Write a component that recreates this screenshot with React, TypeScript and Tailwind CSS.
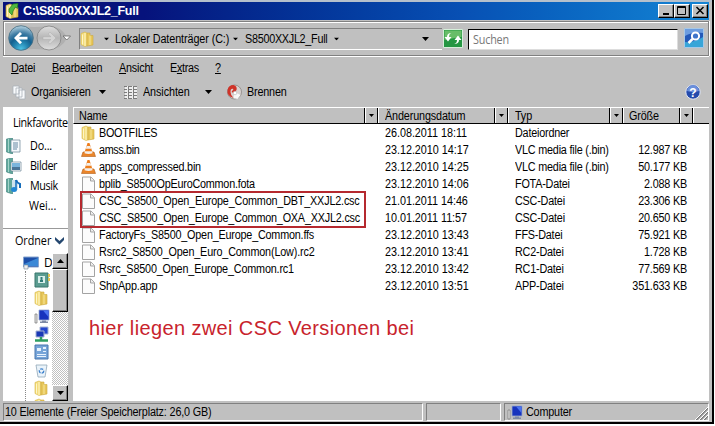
import type { ReactNode } from "react";

type Kind = "folder" | "vlc" | "file";

interface Entry {
  name: string;
  kind: Kind;
  date: string;
  type: string;
  size: string;
  spacing: string;
}

const entries: Entry[] = [
  { name: "BOOTFILES", kind: "folder", date: "26.08.2011 18:11", type: "Dateiordner", size: "", spacing: "tracking-[-0.29px]" },
  { name: "amss.bin", kind: "vlc", date: "23.12.2010 14:17", type: "VLC media file (.bin)", size: "12.987 KB", spacing: "tracking-[-0.4px]" },
  { name: "apps_compressed.bin", kind: "vlc", date: "23.12.2010 14:25", type: "VLC media file (.bin)", size: "50.177 KB", spacing: "tracking-[-0.22px]" },
  { name: "bplib_S8500OpEuroCommon.fota", kind: "file", date: "23.12.2010 14:06", type: "FOTA-Datei", size: "2.088 KB", spacing: "tracking-[-0.25px]" },
  { name: "CSC_S8500_Open_Europe_Common_DBT_XXJL2.csc", kind: "file", date: "21.01.2011 14:46", type: "CSC-Datei", size: "23.306 KB", spacing: "tracking-[-0.19px]" },
  { name: "CSC_S8500_Open_Europe_Common_OXA_XXJL2.csc", kind: "file", date: "10.01.2011 11:57", type: "CSC-Datei", size: "20.650 KB", spacing: "tracking-[-0.21px]" },
  { name: "FactoryFs_S8500_Open_Europe_Common.ffs", kind: "file", date: "23.12.2010 13:43", type: "FFS-Datei", size: "75.921 KB", spacing: "tracking-[-0.22px]" },
  { name: "Rsrc2_S8500_Open_Euro_Common(Low).rc2", kind: "file", date: "23.12.2010 13:41", type: "RC2-Datei", size: "1.728 KB", spacing: "tracking-[-0.18px]" },
  { name: "Rsrc_S8500_Open_Europe_Common.rc1", kind: "file", date: "23.12.2010 13:42", type: "RC1-Datei", size: "77.569 KB", spacing: "tracking-[-0.19px]" },
  { name: "ShpApp.app", kind: "file", date: "23.12.2010 13:51", type: "APP-Datei", size: "351.633 KB", spacing: "tracking-[-0.12px]" },
];

// Narrow UI lettering used for nearly every label
function Label({ children, className = "tracking-[-0.2px]" }: { children: ReactNode; className?: string }) {
  return <span className={`inline-block origin-left scale-x-90 whitespace-nowrap ${className}`}>{children}</span>;
}

function Caret({ className = "" }: { className?: string }) {
  return (
    <svg className={`shrink-0 ${className}`} width="7" height="4" viewBox="0 0 7 4">
      <path d="M0 0h7L3.5 4z" fill="#000" />
    </svg>
  );
}

function FolderIcon({ open = false }: { open?: boolean }) {
  return (
    <svg className="shrink-0" width="15" height="16" viewBox="0 0 15 16">
      <path d="M1 2.500L5 1l2 1v13l-2 .5-4-2z" fill="#f3dc7c" stroke="#d6b545" strokeWidth=".6" />
      <path d="M7 2h3v2.500h3V14l-6 1z" fill="#e7c75a" stroke="#cda93c" strokeWidth=".6" />
      <path d="M5 2v13M2.500 3.500v10" stroke="#fff6c6" />
      <path d="M10 4.500V14" stroke="#f8e69a" />
      {open && <path d="M4 9V6l4-5 5-.5-.5 5-2-1.500L8 8l-1 4z" fill="#4fb93f" stroke="#176f1b" strokeWidth=".6" />}
    </svg>
  );
}

function ConeIcon() {
  return (
    <svg className="shrink-0" width="15" height="16" viewBox="0 0 15 16">
      <path d="M2 10h11l1.500 4.500h-14z" fill="#e8862d" stroke="#b65e15" strokeWidth=".6" />
      <path d="M6.500 1h2l3.500 11q-4.500 2-9 0z" fill="#ee7e1d" />
      <path d="M5.700 4h3.700l.9 2.700H4.800zM4 9.300h7l.6 2q-4 1.500-8.200 0z" fill="#f3efe9" />
    </svg>
  );
}

function PageIcon() {
  return (
    <svg className="shrink-0" width="15" height="16" viewBox="0 0 15 16">
      <path d="M1.500 1h8.500l3.500 3.500V15.500h-12z" fill="#fcfcfc" stroke="#a3a3a3" />
      <path d="M9.500 1v4h4" fill="#eee" stroke="#a3a3a3" />
    </svg>
  );
}

function EntryIcon({ kind }: { kind: Kind }) {
  if (kind === "folder") return <FolderIcon />;
  if (kind === "vlc") return <ConeIcon />;
  return <PageIcon />;
}

function LibraryIcon({ children }: { children: ReactNode }) {
  return (
    <svg className="shrink-0" width="16" height="16" viewBox="0 0 16 16">
      <path d="M.5 1l6-1v16l-6-2z" fill="#5fa79b" stroke="#397e78" strokeWidth=".6" />
      <path d="M2.500 1v13" stroke="#a3d3c9" />
      {children}
    </svg>
  );
}

function ComputerIcon() {
  return (
    <svg className="shrink-0" width="16" height="15" viewBox="0 0 16 15">
      <path d="M1 5h2v9H1z" fill="#e5e5e5" stroke="#777" strokeWidth=".7" />
      <path d="M5 1h10v10H5z" fill="#1733bd" stroke="#9ba9cc" strokeWidth=".8" />
      <path d="M9 1.500h5.500V8z" fill="#4a73f0" />
      <path d="M8 11.500h4v1h2V14H6v-1.500h2z" fill="#7e8aa5" />
    </svg>
  );
}

function WindowButton({ children }: { children: ReactNode }) {
  return (
    <button className="flex h-[14px] w-4 items-center justify-center border border-t-white border-r-black border-b-black border-l-white bg-[#c0c0c0] shadow-[inset_-1px_-1px_0_#808080]">
      <svg className="shrink-0" width="12" height="12" viewBox="0 0 12 12">{children}</svg>
    </button>
  );
}

function TitleBar() {
  return (
    <div className="flex h-[18px] items-center bg-linear-to-r from-[#06127c] from-20% via-[#0850b4] via-65% to-[#1584d4] pl-[2px] pr-px">
      <FolderIcon open />
      <span className="ml-[3px] text-[12.500px] font-bold leading-[18px] tracking-[-0.25px] text-white">C:\S8500XXJL2_Full</span>
      <div className="ml-auto flex">
        <WindowButton><path d="M3 8h6v2H3z" /></WindowButton>
        <WindowButton><path d="M1.500 1.500h8v8h-8zM1.500 2.500h8" fill="none" stroke="#000" /></WindowButton>
        <div className="w-[2px]" />
        <WindowButton><path d="M2.500 2l7 7M9.500 2l-7 7" stroke="#000" strokeWidth="1.500" /></WindowButton>
      </div>
    </div>
  );
}

function NavButtons() {
  return (
    <svg className="shrink-0" width="66" height="30" viewBox="0 0 66 30">
      <defs>
        <radialGradient id="back" cx=".5" cy=".95" r=".95">
          <stop offset="0" stopColor="#4cc3e6" />
          <stop offset=".3" stopColor="#2384b0" />
          <stop offset=".5" stopColor="#13608f" />
          <stop offset=".7" stopColor="#4480a6" />
          <stop offset="1" stopColor="#b9d5e2" />
        </radialGradient>
        <linearGradient id="fwd" x1="0" y1="0" x2="0" y2="1">
          <stop offset="0" stopColor="#dedede" />
          <stop offset=".5" stopColor="#b6b6b6" />
          <stop offset="1" stopColor="#dedede" />
        </linearGradient>
      </defs>
      <path d="M15 3Q29 5 43 3q14 0 19 12-5 11-19 12-14-2-28 0z" fill="#b0b0b0" />
      <circle cx="16" cy="15" r="12.300" fill="url(#back)" stroke="#426b80" strokeWidth=".8" />
      <path d="M9 15l6-6 2 2-3 2.700h8.500v2.800H14l3 2.700-2 2z" fill="#fff" />
      <circle cx="44" cy="15" r="12" fill="url(#fwd)" stroke="#818181" strokeWidth=".8" />
      <path d="M51 15l-6-6-2 2 3 2.700h-8v2.800h8l-3 2.700 2 2z" fill="#d4d4d4" stroke="#aaa" strokeWidth=".4" />
      <path d="M58 13h7.500l-3.700 4z" fill="#fff" stroke="#666" strokeWidth=".8" />
    </svg>
  );
}

function AddressRow() {
  return (
    <div className="mt-px flex h-[35px] border border-[#808080] shadow-[inset_1px_1px_0_#fff,0_1px_0_#fff,1px_0_0_#fff]">
      <div className="mt-px ml-px w-[74px] shrink-0"><NavButtons /></div>
      <div className="mt-[6px] flex h-[22px] w-[363px] shrink-0 items-center border-t border-l border-b border-t-[#808080] border-b-white border-l-[#808080] bg-[#c0c0c0]">
        <FolderIcon />
        <Caret className="ml-[8px] scale-75" />
        <span className="ml-[5px] w-[113px]"><Label className="tracking-[-0.1px]">Lokaler Datenträger (C:)</Label></span>
        <Caret className="ml-[4px] scale-75" />
        <span className="ml-[6px] w-[83px]"><Label className="tracking-[-0.3px]">S8500XXJL2_Full</Label></span>
        <Caret className="ml-[5px] scale-75" />
        <Caret className="mr-[13px] ml-auto" />
      </div>
      <svg className="mt-[7px] ml-px shrink-0" width="20" height="19" viewBox="0 0 20 19">
        <path d="M.5.500h19v18H.5z" fill="#249642" stroke="#d6eeda" />
        <path d="M1.500 1.500h17V8q-8 1-17 3z" fill="#68bd68" />
        <path d="M8.500 4Q6 4.500 6 8h2.500L5 12.500 1.500 8H4q0-4 4.500-4zM11 15q3-.5 3-4h-2.500L15 6.500l3.500 4.500H16q0 4-5 4z" fill="#fff" />
      </svg>
      <div className="mt-[7px] ml-[5px] flex h-[21px] w-[210px] shrink-0 items-center border border-t-black border-r-[#ddd] border-b-[#ddd] border-l-black bg-white pl-[4px] font-['Open_Sans',sans-serif] text-[#777]">
        <Label className="tracking-[-0.2px]">Suchen</Label>
      </div>
      <svg className="mt-[6px] ml-[6px] shrink-0" width="20" height="20" viewBox="0 0 20 20">
        <path d="M.5.500h19v19H.5z" fill="#2459b8" stroke="#a7c8e6" />
        <path d="M1 14q9 1 18-5v10H1z" fill="#38a5d8" />
        <path d="M1 1h18v4Q9 3 1 8z" fill="#6c9de0" />
        <circle cx="11.500" cy="8" r="3.600" fill="#3f75ca" stroke="#fff" strokeWidth="2" />
        <path d="M8.500 11L4.500 15" stroke="#fff" strokeWidth="2.500" />
      </svg>
    </div>
  );
}

function MenuBar() {
  return (
    <div className="mt-px flex h-[21px] items-center">
      <span className="ml-[8px] w-[41px]"><Label><u>D</u>atei</Label></span>
      <span className="w-[67px]"><Label><u>B</u>earbeiten</Label></span>
      <span className="w-[51px]"><Label><u>A</u>nsicht</Label></span>
      <span className="w-[45px]"><Label className="tracking-[-0.35px]">E<u>x</u>tras</Label></span>
      <Label><u>?</u></Label>
    </div>
  );
}

function CommandBar() {
  return (
    <div className="flex h-[30px] items-center pb-[2px]">
      <svg className="ml-[9px]" width="14" height="15" viewBox="0 0 14 15">
        <path d="M1 1h6v8H1zM4 3h6v9H4zM7 5h6v9H7z" fill="#f8fafc" stroke="#a9b1b9" strokeWidth=".8" />
      </svg>
      <span className="ml-[5px] w-[60px]"><Label>Organisieren</Label></span>
      <Caret className="ml-[8px]" />
      <svg className="ml-[18px]" width="14" height="15" viewBox="0 0 14 15">
        <path d="M1 1h12v13H1z" fill="#eee" />
        <path d="M0 1.500h3m2 0h3m2 0h3M0 4.500h3m2 0h3m2 0h3M0 7.500h3m2 0h3m2 0h3M0 10.500h3m2 0h3m2 0h3M0 13.500h3m2 0h3m2 0h3M4.500 1v13M9.500 1v13" stroke="#6f6f6f" strokeWidth=".9" />
      </svg>
      <span className="ml-[5px] w-[48px]"><Label className="tracking-[-0.1px]">Ansichten</Label></span>
      <Caret className="ml-[14px]" />
      <svg className="ml-[14px]" width="17" height="16" viewBox="0 0 16 16">
        <circle cx="8" cy="8" r="7" fill="#d9d3d1" stroke="#827b78" strokeWidth=".7" />
        <path d="M8 8l6 3-3 4-4-1z" fill="#f8f8f8" />
        <path d="M7 14Q0 12 1 6q1-5 6-5 4 1 3 5-2 4-5 2l2-3q-3-1-3 3 0 3 3 6z" fill="#cf3328" />
        <circle cx="8.500" cy="9" r="1.800" fill="#fff" stroke="#aaa" strokeWidth=".5" />
      </svg>
      <span className="ml-[4px]"><Label>Brennen</Label></span>
      <svg className="mr-[8px] ml-auto" width="16" height="16" viewBox="0 0 16 16">
        <circle cx="8" cy="8" r="7.200" fill="#244aac" stroke="#e0e6f3" />
        <path d="M2 7a6 6 0 0 1 12 0q-6 2-12 0z" fill="#6b8fdb" />
        <text x="8" y="12.500" textAnchor="middle" fontSize="12" fontWeight="bold" fill="#fff">?</text>
      </svg>
    </div>
  );
}

function ScrollButton({ up = false }: { up?: boolean }) {
  return (
    <div className="flex h-4 w-4 items-center justify-center border border-t-white border-r-black border-b-black border-l-white bg-[#c0c0c0] shadow-[inset_-1px_-1px_0_#808080]">
      <Caret className={up ? "rotate-180" : ""} />
    </div>
  );
}

function TreeItem({ children }: { children: ReactNode }) {
  return <div className="flex h-[18px] shrink-0 items-center">{children}</div>;
}

function Tree() {
  return (
    <div className="flex h-[148px] overflow-hidden">
      <div className="w-[49px] overflow-hidden">
        <div className="mt-px flex h-[17px] items-center pl-[20px]">
          <svg className="shrink-0" width="17" height="14" viewBox="0 0 17 14">
            <path d="M.5 1h15v10H.5z" fill="#1d4fa8" stroke="#87a5cf" />
            <path d="M1 8L15 2v8H1z" fill="#3b88d6" />
            <path d="M1 9h4v4H1z" fill="#eee" stroke="#789" strokeWidth=".6" />
          </svg>
          <span className="ml-[4px]">D</span>
        </div>
        <div className="ml-[22px] flex h-[130px] flex-col items-start border-l border-dotted border-[#888] pl-[8px]">
          <TreeItem>
            <svg width="16" height="16" viewBox="0 0 16 16">
              <path d="M1 1h13v14H1z" fill="#5b9c91" stroke="#39766d" />
              <path d="M14 2h2v3h-2zm0 4h2v3h-2z" fill="#e3c352" />
              <path d="M4 4h7v7H4z" fill="#d9efeb" />
              <path d="M6 10V8q1.500-2 3 0v2zM6.500 5h2v2h-2z" fill="#327b78" />
            </svg>
          </TreeItem>
          <TreeItem><FolderIcon /></TreeItem>
          <TreeItem><ComputerIcon /></TreeItem>
          <TreeItem>
            <svg width="16" height="17" viewBox="0 0 16 17">
              <path d="M6 1h8v7H6z" fill="#2547ce" stroke="#a5b2d2" />
              <path d="M2 5h8v6H2z" fill="#1a39b6" stroke="#a5b2d2" />
              <path d="M7 11v3M1 14.500h13" stroke="#2f9e62" strokeWidth="2.500" />
            </svg>
          </TreeItem>
          <TreeItem>
            <svg width="15" height="16" viewBox="0 0 15 16">
              <path d="M1 1h13v14H1z" fill="#76a4d8" stroke="#4877ae" />
              <path d="M3 4h4v3H3zM9 3h3v2H9zM9 7h3v1H9zM3 10h9v1H3zM3 12h9v1H3z" fill="#e8f2fd" />
            </svg>
          </TreeItem>
          <TreeItem>
            <svg width="15" height="15" viewBox="0 0 15 15">
              <path d="M2 2h11l-2 12H4z" fill="#eaf3fa" stroke="#91a7b8" strokeWidth=".8" />
              <circle cx="7.500" cy="8" r="2.200" fill="none" stroke="#3d82ce" strokeDasharray="3 1" strokeWidth="1.300" />
            </svg>
          </TreeItem>
          <TreeItem><FolderIcon /></TreeItem>
          <TreeItem><FolderIcon /></TreeItem>
        </div>
      </div>
      <div className="flex w-4 flex-col bg-[repeating-conic-gradient(#c0c0c0_0_25%,#fff_0_50%)] bg-[length:2px_2px]">
        <ScrollButton up />
        <div className="h-[43px] border border-t-white border-r-black border-b-black border-l-white bg-[#c0c0c0] shadow-[inset_-1px_-1px_0_#808080]" />
        <div className="mt-auto"><ScrollButton /></div>
      </div>
    </div>
  );
}

function Sidebar() {
  return (
    <aside className="flex w-[65px] flex-col bg-white font-['Open_Sans',sans-serif] text-[12px]">
      <div className="mt-[7px] h-[22px] w-[55px] pl-[10px] leading-[18px]"><Label className="tracking-[-0.42px]">Linkfavorite</Label></div>
      <div className="flex h-5 items-center gap-[8px] pl-[3px]">
        <LibraryIcon><path d="M5 2h9v12H5z" fill="#f6f9fc" stroke="#6c8497" strokeWidth=".7" /><path d="M7 5h5M7 7h5M7 9h5M7 11h4" stroke="#6587a3" /></LibraryIcon>
        <Label>Do...</Label>
      </div>
      <div className="flex h-5 items-center gap-[8px] pl-[3px]">
        <LibraryIcon><path d="M5 4h10v9H5z" fill="#fff" stroke="#6c8497" strokeWidth=".7" /><path d="M6 5h8v4H6z" fill="#7bb5dd" /><path d="M6 9h8v3H6z" fill="#4b7598" /></LibraryIcon>
        <Label className="tracking-[-0.45px]">Bilder</Label>
      </div>
      <div className="flex h-5 items-center gap-[8px] pl-[3px]">
        <LibraryIcon><path d="M6 2h6v10H6z" fill="#cde3ee" /><path d="M10 2q1 3 4 4v4" fill="none" stroke="#156dbb" strokeWidth="2" /><path d="M10 2v9" stroke="#156dbb" strokeWidth="1.500" /><ellipse cx="8" cy="11.500" rx="3" ry="2.500" fill="#2187d4" /></LibraryIcon>
        <Label className="tracking-[-0.5px]">Musik</Label>
      </div>
      <div className="h-[32px] pl-[26px] leading-5"><Label className="tracking-normal">Wei...</Label></div>
      <div className="flex h-[25px] shrink-0 items-center border-t border-[#999] bg-white pl-[12px]">
        <span className="w-[39px]"><Label className="tracking-[-0.05px]">Ordner</Label></span>
        <svg className="shrink-0" width="11" height="8" viewBox="0 0 11 8"><path d="M1 0l4.500 4L10 0v3l-4.500 4.500L1 3z" fill="#24476f" /></svg>
      </div>
      <Tree />
    </aside>
  );
}

function HeaderCell({ label, className }: { label: string; className: string }) {
  return (
    <div className={`flex shrink-0 border-r border-white ${className}`}>
      <span className="flex-1 border-r border-black leading-[16px]"><Label className="tracking-[-0.15px]">{label}</Label></span>
      <span className="flex w-[13px] shrink-0 items-center justify-center border-r border-l border-r-black border-l-white">
        <svg width="5" height="3" viewBox="0 0 5 3"><path d="M0 0h5L2.500 3z" /></svg>
      </span>
    </div>
  );
}

function FileList() {
  return (
    <main className="relative flex-1 overflow-hidden bg-white">
      <div className="flex h-[17px] border-t border-l border-b border-t-white border-b-black border-l-white bg-[#c0c0c0]">
        <HeaderCell label="Name" className="w-[305px] pl-[5px]" />
        <HeaderCell label="Änderungsdatum" className="w-[130px] pl-[6px]" />
        <HeaderCell label="Typ" className="w-[115px] pl-[6px]" />
        <HeaderCell label="Größe" className="w-[70px] pl-[5px]" />
      </div>
      {entries.map((entry) => (
        <div key={entry.name} className="flex h-[17.100px] items-center whitespace-nowrap">
          <div className="flex w-[312px] items-center pl-[8px]">
            <EntryIcon kind={entry.kind} />
            <span className="ml-[3px] w-[262px]"><Label className={entry.spacing}>{entry.name}</Label></span>
          </div>
          <span className="w-[130px]"><Label className="tracking-[-0.03px]">{entry.date}</Label></span>
          <span className="w-[99px]"><Label className="tracking-[-0.22px]">{entry.type}</Label></span>
          <span className="w-[73px] origin-right scale-x-90 text-right tracking-[-0.2px]">{entry.size}</span>
        </div>
      ))}
      <div className="absolute top-[84px] left-[7px] h-[37px] w-[286px] border-2 border-[#b5292f]" />
      <p className="absolute top-[209px] left-[16px] text-[20px] leading-[24px] tracking-[0.38px] whitespace-nowrap text-[#c8232c]">hier liegen zwei CSC Versionen bei</p>
    </main>
  );
}

function StatusBar() {
  const panel = "flex h-[18px] items-center border border-t-[#808080] border-r-white border-b-white border-l-[#808080]";
  return (
    <footer className="mt-[2px] flex gap-[3px]">
      <div className={`${panel} w-[420px] pl-px`}><Label className="tracking-[-0.17px]">10 Elemente (Freier Speicherplatz: 26,0 GB)</Label></div>
      <div className={`${panel} w-[75px]`} />
      <div className={`${panel} flex-1 pl-[2px]`}>
        <ComputerIcon />
        <span className="ml-[3px]"><Label>Computer</Label></span>
        <svg className="ml-auto self-end" width="13" height="13" viewBox="0 0 13 13">
          <path d="M1 13L13 1M5 13l8-8M9 13l4-4" stroke="#777" strokeWidth="1.500" />
          <path d="M0 13L13 0M4 13l9-9M8 13l5-5" stroke="#fff" />
        </svg>
      </div>
    </footer>
  );
}

export default function App() {
  return (
    <div className="h-[426px] w-[715px] overflow-hidden bg-white font-['Liberation_Sans',Arial,sans-serif] text-[12px] leading-[16px] text-black">
      <div className="h-[424px] w-[714px] border-r-2 border-b-2 border-black bg-[#c0c0c0] pt-[2px] pr-[3px] pl-[3px] shadow-[inset_0_2px_0_#b5c0cc]">
        <TitleBar />
        <AddressRow />
        <MenuBar />
        <CommandBar />
        <div className="-mt-px flex h-[294px]">
          <Sidebar />
          <div className="w-[5px]" />
          <FileList />
        </div>
        <StatusBar />
      </div>
    </div>
  );
}
